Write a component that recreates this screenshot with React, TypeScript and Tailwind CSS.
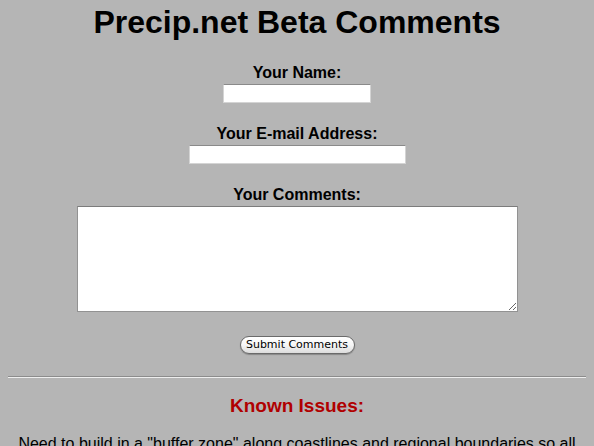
export default function App() {
  return (
    <div className="min-h-screen bg-[#b5b5b5] font-['Liberation_Sans',Arial,sans-serif] text-black">
      <h1 className="pt-[4px] text-center text-[32px] font-bold leading-[37px]">Precip.net Beta Comments</h1>

      <form className="mt-[23px] flex flex-col items-center" onSubmit={(e) => e.preventDefault()}>
        <label htmlFor="name" className="text-[16px] font-bold leading-[18px]">
          Your Name:
        </label>
        <input
          id="name"
          type="text"
          className="mt-[2px] h-[19px] w-[148px] border border-[#d4d4d4] border-t-[#8a8a8a] bg-white px-1 text-[13px] outline-none"
        />

        <label htmlFor="email" className="mt-[22px] text-[16px] font-bold leading-[18px]">
          Your E-mail Address:
        </label>
        <input
          id="email"
          type="text"
          className="mt-[2px] h-[19px] w-[217px] border border-[#d4d4d4] border-t-[#8a8a8a] bg-white px-1 text-[13px] outline-none"
        />

        <label htmlFor="comments" className="mt-[22px] text-[16px] font-bold leading-[18px]">
          Your Comments:
        </label>
        <textarea
          id="comments"
          className="mt-[2px] h-[106px] w-[441px] border border-[#929292] border-t-[#7c7c7c] bg-white p-1 text-[13px] outline-none"
        />

        <button
          type="submit"
          className="mt-[24px] flex h-[18px] w-[115px] items-center justify-center rounded-full border border-[#6a6a6a] bg-linear-to-b from-white via-[#f6f6f6] to-[#dcdcdc] font-['DejaVu_Sans',sans-serif] text-[11px] leading-[16px] text-black shadow-[0_1px_1px_rgba(0,0,0,0.25)]"
        >
          Submit Comments
        </button>
      </form>

      <hr className="mx-2 mt-[22px] border-y border-t-[#8c8c8c] border-b-[#eeeeee]" />

      <h3 className="mt-[17px] text-center text-[19px] font-bold leading-[22px] text-[#b00000]">Known Issues:</h3>

      <p className="mx-2 mt-[18px] text-center text-[16px] leading-[18px]">
        Need to build in a "buffer zone" along coastlines and regional boundaries so all precipitation near the
        edges of a region is counted.
      </p>
    </div>
  )
}
